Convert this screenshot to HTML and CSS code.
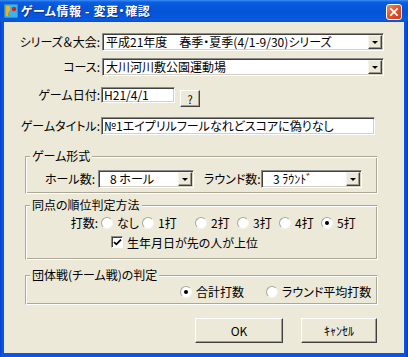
FILE: index.html
```html
<!DOCTYPE html>
<html lang="ja">
<head>
<meta charset="utf-8">
<title>ゲーム情報 - 変更・確認</title>
<link rel="stylesheet" href="styles.css">
</head>
<body>
<div class="window">
  <div class="titlebar">
    <svg class="app-icon" viewBox="0 0 14 14" width="14" height="14">
      <rect x="0" y="0" width="14" height="14" fill="#39b6e6"/>
      <rect x="0" y="0" width="14" height="14" fill="none" stroke="#1a6fc0" stroke-width="1"/>
      <path d="M2 2 L6 2 L6 6 L4 9 L4 12 L2 12 Z" fill="#f2b21a"/>
      <path d="M4 9 L7 12 L4 12 Z" fill="#e87a12"/>
      <circle cx="10" cy="5" r="2.2" fill="#e81818"/>
    </svg>
    <span class="title">ゲーム情報 - 変更・確認</span>
    <span class="close">
      <svg viewBox="0 0 16 16" width="16" height="16">
        <path d="M4.5 4.5 L11.5 11.5 M11.5 4.5 L4.5 11.5" stroke="#fff" stroke-width="2" stroke-linecap="square"/>
      </svg>
    </span>
  </div>

  <div class="client">
    <div class="frow r1">
      <span class="lbl">シリーズ＆大会:</span>
      <div class="field select series"><span class="val">平成21年度　春季・夏季(4/1-9/30)シリーズ</span><span class="drop"></span></div>
    </div>
    <div class="frow r2">
      <span class="lbl">コース:</span>
      <div class="field select series"><span class="val">大川河川敷公園運動場</span><span class="drop"></span></div>
    </div>
    <div class="frow r3">
      <span class="lbl lbl-date">ゲーム日付:</span>
      <div class="field input date"><span class="val">H21/4/1</span></div>
      <span class="btn qbtn">?</span>
    </div>
    <div class="frow r4">
      <span class="lbl">ゲームタイトル:</span>
      <div class="field input gtitle"><span class="val">№1エイプリルフールなれどスコアに偽りなし</span></div>
    </div>

    <fieldset class="group g1">
      <legend>ゲーム形式</legend>
      <div class="grow">
        <span class="lbl lbl-hole">ホール数:</span>
        <div class="field select hole"><span class="val pad">8 ホール</span><span class="drop"></span></div>
        <span class="lbl lbl-round">ラウンド数:</span>
        <div class="field select round"><span class="val pad">3 ﾗｳﾝﾄﾞ</span><span class="drop"></span></div>
      </div>
    </fieldset>

    <fieldset class="group g2">
      <legend>同点の順位判定方法</legend>
      <div class="grow strokes">
        <span class="lbl lbl-strokes">打数:</span>
        <div class="opts">
          <span class="opt"><span class="radio"></span>なし</span>
          <span class="opt"><span class="radio"></span>1打</span>
          <span class="opt"><span class="radio"></span>2打</span>
          <span class="opt"><span class="radio"></span>3打</span>
          <span class="opt"><span class="radio"></span>4打</span>
          <span class="opt"><span class="radio on"></span>5打</span>
        </div>
      </div>
      <div class="grow birth">
        <span class="check">
          <svg viewBox="0 0 9 9" width="9" height="9"><path d="M1 4 L3.3 6.4 L8 1.6" fill="none" stroke="#000" stroke-width="1.7"/></svg>
        </span>
        <span>生年月日が先の人が上位</span>
      </div>
    </fieldset>

    <fieldset class="group g3">
      <legend>団体戦(チーム戦)の判定</legend>
      <div class="grow team">
        <span class="opt"><span class="radio on"></span>合計打数</span>
        <span class="opt"><span class="radio"></span>ラウンド平均打数</span>
      </div>
    </fieldset>

    <div class="buttons">
      <span class="btn ok">OK</span>
      <span class="btn cancel">ｷｬﾝｾﾙ</span>
    </div>
  </div>
</div>
</body>
</html>
```

FILE: styles.css
```css
html, body {
  margin: 0;
  padding: 0;
}
body {
  width: 408px;
  height: 357px;
  overflow: hidden;
  background: #ffffff;
  font-family: "Noto Sans CJK JP", "Noto Sans", sans-serif;
  font-size: 12px;
  font-feature-settings: "palt";
  color: #000;
}
.window {
  width: 408px;
  height: 357px;
  box-sizing: border-box;
  display: flex;
  flex-direction: column;
  background: linear-gradient(to right, #0a3fc8, #0655e6 2px, #0655e6 calc(100% - 3px), #0a3bbd);
}
.titlebar {
  height: 22px;
  flex: none;
  display: flex;
  align-items: center;
  padding: 0 4px 0 4px;
  background: linear-gradient(to bottom, #3e8df6 0, #0b61e0 2px, #0557d9 6px, #0454d8 12px, #0758dc 18px, #0a5ae0 20px, #0451cf 22px);
}
.app-icon {
  flex: none;
}
.title {
  flex: 1;
  margin-left: 3px;
  color: #fff;
  font-weight: bold;
  font-size: 12px;
  line-height: 16px;
  letter-spacing: 0.6px;
  text-shadow: 1px 1px 0 #0a2f96;
}
.close {
  flex: none;
  width: 16px;
  height: 16px;
  margin-top: 1px;
  margin-right: 2px;
  box-sizing: border-box;
  border: 1px solid #fff;
  border-radius: 3px;
  background: linear-gradient(135deg, #f08a66, #e4562e 45%, #cc3a12);
  display: flex;
}
.close svg {
  width: 14px;
  height: 14px;
}
.client {
  flex: 1;
  margin: 0 4px 4px 4px;
  background: #ece9d8;
  display: flex;
  flex-direction: column;
}

/* top form rows */
.frow {
  display: flex;
  align-items: center;
  height: 18px;
}
.r1 { margin-top: 11px; }
.r2 { margin-top: 7px; }
.r3 { margin-top: 11px; height: 20px; align-items: flex-start; }
.r4 { margin-top: 10px; }
.lbl {
  flex: none;
  width: 96px;
  text-align: right;
  line-height: 16px;
  white-space: nowrap;
}
.lbl-date { margin-top: 0; }

.field {
  box-sizing: border-box;
  height: 18px;
  background: #fff;
  border: 1px solid;
  border-color: #8c8c8c #ffffff #ffffff #8c8c8c;
  box-shadow: inset 1px 1px #404040, inset -1px -1px #d4d0c8;
  display: flex;
  align-items: center;
  padding: 1px;
}
.val {
  flex: 1;
  min-width: 0;
  line-height: 16px;
  padding-left: 2px;
  white-space: nowrap;
}
.val.pad { padding-left: 10px; }
.select.series {
  margin-left: 2px;
  width: 282px;
}
.input.date {
  margin-left: 1px;
  width: 74px;
  height: 16px;
}
.input.date .val { padding-left: 1px; }
.input.gtitle {
  margin-left: 1px;
  width: 274px;
}
.gtitle .val { padding-left: 1px; }
.drop {
  flex: none;
  align-self: stretch;
  width: 14px;
  box-sizing: border-box;
  background: #ece9d8;
  border: 1px solid;
  border-color: #f4f3ee #404040 #404040 #f4f3ee;
  box-shadow: inset -1px -1px #9d9a8c;
  display: flex;
  align-items: center;
  justify-content: center;
}
.drop::after {
  content: "";
  width: 0;
  height: 0;
  border-left: 3px solid transparent;
  border-right: 3px solid transparent;
  border-top: 3px solid #000;
  margin-top: 1px;
}

.btn {
  box-sizing: border-box;
  display: flex;
  align-items: center;
  justify-content: center;
  background: #ece9d8;
  border: 1px solid;
  border-color: #ffffff #404040 #404040 #ffffff;
  box-shadow: inset -1px -1px #a29f90;
  line-height: 16px;
}
.qbtn {
  margin-left: 5px;
  margin-top: 3px;
  width: 20px;
  height: 17px;
  font-size: 11px;
}

/* groups */
.group {
  box-sizing: border-box;
  width: 353px;
  margin: 13px 0 0 21px;
  padding: 0;
  border: 1px solid;
  border-color: #aca899 #ffffff #ffffff #aca899;
  box-shadow: inset 1px 1px #ffffff, inset -1px -1px #aca899;
  min-inline-size: auto;
}
.group legend {
  margin-left: 4px;
  padding: 0 2px;
  line-height: 16px;
  background: #ece9d8;
}
.g1 { margin-top: 13px; padding: 6px 0 5px 0; }
.g2 { margin-top: 3px; padding: 2px 0 9px 0; }
.g3 { margin-top: 7px; padding: 1px 0 4px 0; }

.grow {
  display: flex;
  align-items: center;
  height: 18px;
}
.lbl-hole { width: 69px; }
.select.hole {
  margin-left: 3px;
  width: 96px;
}
.lbl-round { width: 55px; margin-left: 10px; }
.select.round {
  margin-left: 2px;
  width: 101px;
}

.strokes { height: 16px; }
.lbl-strokes { width: 72px; }
.opts {
  margin-left: 3px;
  display: grid;
  grid-template-columns: 41px 53px 42px 42px 42px auto;
}
.opt {
  display: flex;
  align-items: center;
  line-height: 16px;
  white-space: nowrap;
}
.radio {
  flex: none;
  width: 12px;
  height: 12px;
  box-sizing: border-box;
  border-radius: 50%;
  background: #fff;
  border: 1px solid;
  border-color: #a8a69c #f6f5f0 #f6f5f0 #a8a69c;
  margin-right: 4px;
  display: flex;
  align-items: center;
  justify-content: center;
}
.radio.on::after {
  content: "";
  width: 4px;
  height: 4px;
  border-radius: 50%;
  background: #000;
}
.birth {
  margin-top: 3px;
  height: 16px;
}
.check {
  flex: none;
  margin-left: 85px;
  margin-right: 4px;
  width: 12px;
  height: 12px;
  box-sizing: border-box;
  background: #fff;
  border: 1px solid;
  border-color: #8c8c8c #ffffff #ffffff #8c8c8c;
  box-shadow: inset 1px 1px #404040;
  display: flex;
  align-items: center;
  justify-content: center;
}
.team {
  height: 16px;
  padding-left: 154px;
  display: grid;
  grid-template-columns: 86px auto;
}

.buttons {
  display: flex;
  margin-top: 13px;
  padding-left: 191px;
  gap: 18px;
}
.btn.ok {
  width: 88px;
  height: 25px;
}
.btn.cancel {
  width: 76px;
  height: 25px;
}
```
